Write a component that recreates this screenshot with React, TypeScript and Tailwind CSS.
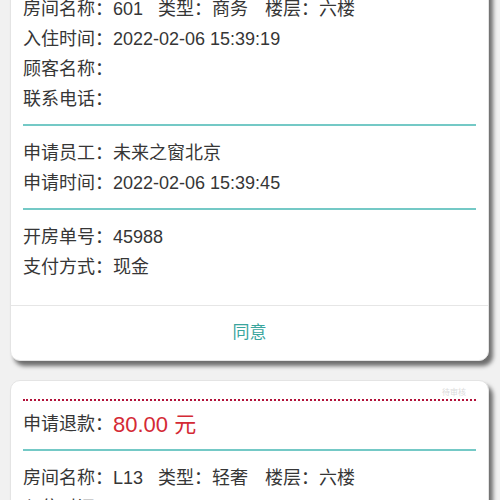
import React from 'react';

const FONT = { fontFamily: '"Liberation Sans", "Noto Sans CJK SC", sans-serif' };

type Refund = {
  amount: string;
  room: string;
  type: string;
  floor: string;
  checkIn: string;
  staff: string;
  applyTime: string;
  orderNo: string;
  payment: string;
};

const REFUNDS: Refund[] = [
  {
    amount: '120.00',
    room: '601',
    type: '商务',
    floor: '六楼',
    checkIn: '2022-02-06 15:39:19',
    staff: '未来之窗北京',
    applyTime: '2022-02-06 15:39:45',
    orderNo: '45988',
    payment: '现金',
  },
  {
    amount: '80.00',
    room: 'L13',
    type: '轻奢',
    floor: '六楼',
    checkIn: '2022-01-30 10:52:33',
    staff: '未来之窗北京',
    applyTime: '2022-02-06 15:40:02',
    orderNo: '45971',
    payment: '现金',
  },
];

function Row({ children }: { children: React.ReactNode }) {
  return <div className="flex h-[30px] items-center whitespace-nowrap">{children}</div>;
}

function Divider() {
  return <div className="mt-[10px] mb-[12px] h-[2px] bg-[#74c9c6]" />;
}

function RefundCard({ item }: { item: Refund }) {
  return (
    <div className="relative rounded-[10px] border border-[#e4e4e4] bg-white shadow-[4px_5px_4px_rgba(0,0,0,0.55)]">
      <span className="absolute top-[6px] right-[22px] text-[8px] text-[#dcdcdc]">待审核</span>
      <div className="pl-[12px] pr-[12px] pt-[18px] pb-[23px] text-[18px] text-[#363636]">
        <div className="border-t-2 border-dotted border-[#b3123a]" />
        <div className="mt-[8px] flex h-[30px] items-center whitespace-nowrap">
          申请退款：
          <span className="text-[22px] text-[#d42a35]">{item.amount} 元</span>
        </div>
        <Divider />
        <Row>
          房间名称：{item.room}
          <span className="ml-[15px]">类型：{item.type}</span>
          <span className="ml-[17px]">楼层：{item.floor}</span>
        </Row>
        <Row>入住时间：{item.checkIn}</Row>
        <Row>顾客名称：</Row>
        <Row>联系电话：</Row>
        <Divider />
        <Row>申请员工：{item.staff}</Row>
        <Row>申请时间：{item.applyTime}</Row>
        <Divider />
        <Row>开房单号：{item.orderNo}</Row>
        <Row>支付方式：{item.payment}</Row>
      </div>
      <div className="flex h-[55px] items-center justify-center border-t border-[#e6e6e6] text-[17px] text-[#3aa59d]">
        同意
      </div>
    </div>
  );
}

export default function App() {
  return (
    <div className="h-[500px] overflow-hidden bg-[#f1f1f1] pl-[10px] pr-[11px]" style={FONT}>
      <div className="-mt-[89px] flex flex-col gap-[19px]">
        {REFUNDS.map((r) => (
          <RefundCard key={r.room} item={r} />
        ))}
      </div>
    </div>
  );
}
